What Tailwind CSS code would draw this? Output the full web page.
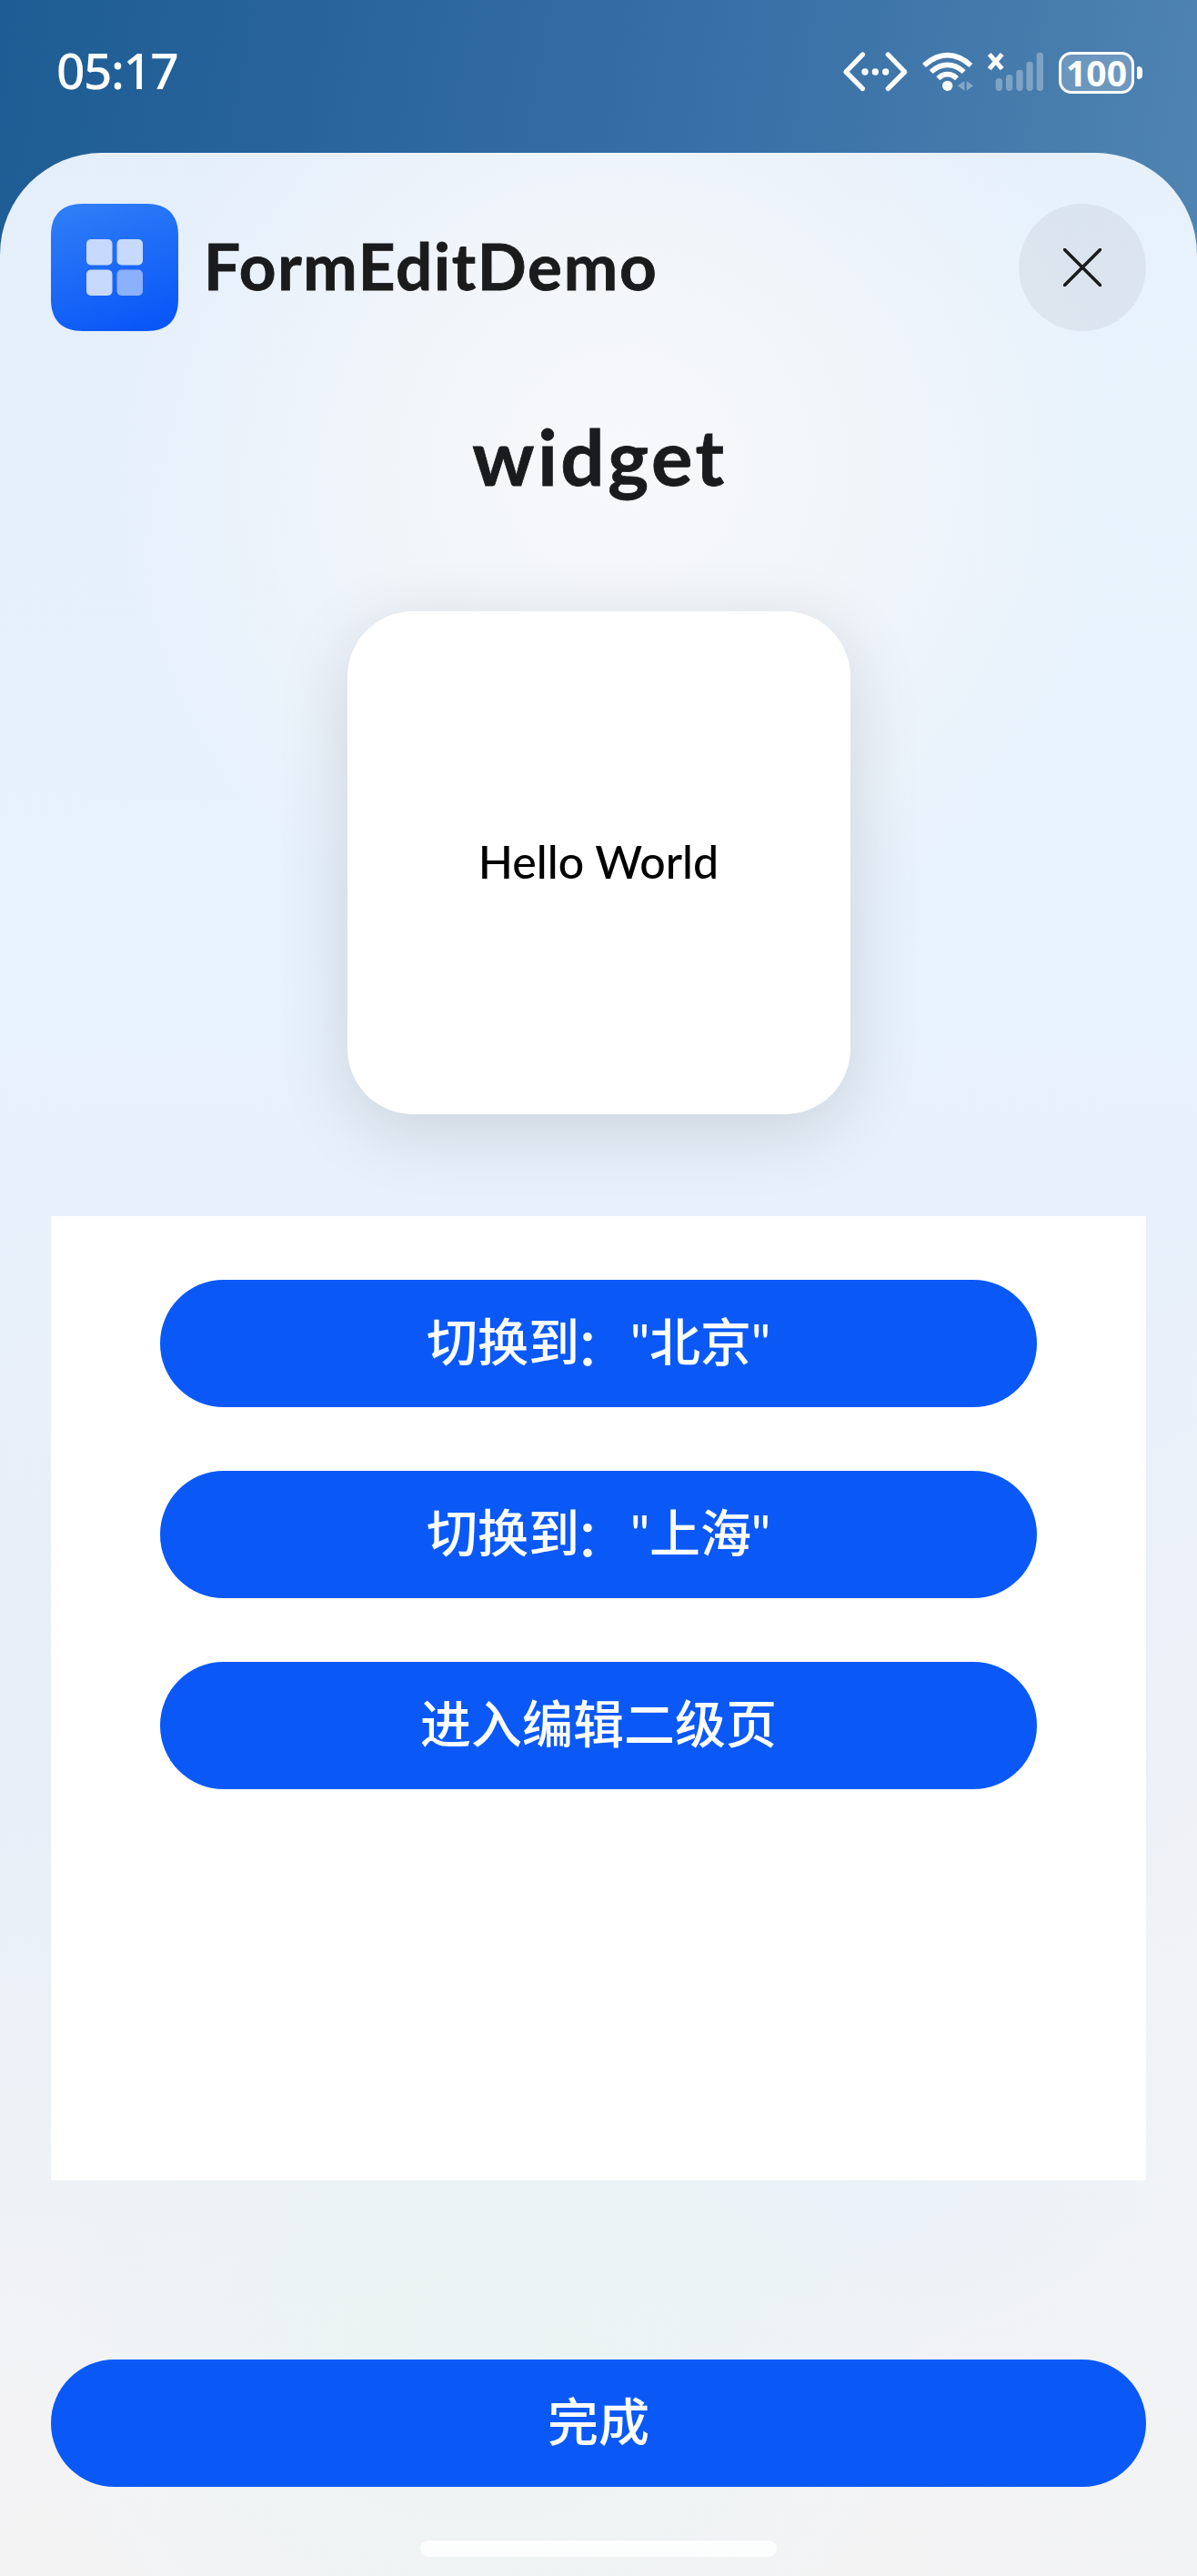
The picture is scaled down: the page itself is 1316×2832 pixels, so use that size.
<!DOCTYPE html>
<html lang="zh-CN">
<head>
<meta charset="utf-8">
<title>FormEditDemo</title>
<script src="https://cdn.jsdelivr.net/npm/@tailwindcss/browser@4"></script>
</head>
<body class="bg-[#1e5c94]">
<div class="flex h-[2832px] w-[1316px] flex-col overflow-hidden bg-[linear-gradient(100deg,#1d5c94_0%,#2b669d_32%,#3870a7_60%,#447aab_80%,#4f84b2_100%)] bg-[length:1316px_300px] bg-no-repeat font-['Lato','Noto_Sans_CJK_SC',sans-serif]">
  <!-- Status bar -->
  <header class="flex h-[168px] shrink-0 items-start justify-between pl-[62px] pr-[60px] pt-[55px] text-white">
    <div class="-mt-[6px] font-['Noto_Sans',sans-serif] text-[55px] font-medium leading-[56px] tracking-[-1.5px]">05:17</div>
    <div class="flex h-[50px]">
      <svg class="h-[50px] w-[75px]" viewBox="75 75 225 150" fill="none" stroke="currentColor" stroke-width="16" stroke-linecap="round" stroke-linejoin="round">
        <path d="M145 90 90 147l55 55M229 90l55 57-55 55"/>
        <g fill="currentColor" stroke="none"><circle cx="153" cy="147" r="11"/><circle cx="187" cy="147" r="11"/><circle cx="221" cy="147" r="11"/></g>
      </svg>
      <svg class="ml-[13px] h-[50px] w-[58px]" viewBox="339 75 174 150" fill="none" stroke="currentColor" stroke-width="17">
        <path d="M348 126Q385 92 425 92t77 34M371 147Q396 124 425 124t54 23M394 169Q408 155 425 155t31 14"/>
        <circle cx="425" cy="193" r="17" fill="currentColor" stroke="none"/>
        <path fill="currentColor" stroke="none" opacity=".35" d="M481 177v32L459 193zM488 177v32l22-16z"/>
      </svg>
      <svg class="ml-[14px] h-[50px] w-[64px]" viewBox="555 75 192 150" fill="currentColor">
        <path fill="none" stroke="currentColor" stroke-width="15" d="M563 89l42 48M605 89l-42 48"/>
        <g opacity=".3"><rect x="584" y="168" width="22" height="42" rx="11"/><rect x="618" y="156" width="22" height="54" rx="11"/><rect x="652" y="140" width="22" height="70" rx="11"/><rect x="685" y="113" width="22" height="97" rx="11"/><rect x="719" y="83" width="22" height="127" rx="11"/></g>
      </svg>
      <div class="ml-[15px] mt-0.5 flex h-[46px] items-center">
        <div class="flex h-[46px] w-[83px] items-center justify-center rounded-[14px] border-[3px] border-white bg-white/20 font-['Noto_Sans',sans-serif] text-[39px] font-bold leading-[40px]">100</div>
        <div class="ml-[3px] h-[14px] w-[6px] rounded-r-[5px] rounded-l-[2px] bg-white"></div>
      </div>
    </div>
  </header>

  <!-- Edit sheet -->
  <main class="flex grow flex-col items-center rounded-t-[112px] px-[56px] pt-[56px] bg-[radial-gradient(ellipse_560px_560px_at_52%_13%,#f7f8fa_0%,#f2f6fa_40%,#f2f6fa00_100%),radial-gradient(ellipse_420px_600px_at_98%_12%,#e8f3fc_0%,#e8f3fc00_100%),radial-gradient(ellipse_500px_380px_at_40%_91%,#eaf4f3_0%,#eaf4f300_100%),radial-gradient(ellipse_460px_260px_at_68%_83%,#eaf2fa_0%,#eaf2fa00_100%),radial-gradient(ellipse_500px_900px_at_105%_80%,#f2f3f6_0%,#f2f3f600_100%),linear-gradient(180deg,#e5effb_0%,#e8f2fc_35%,#e8f0fa_47%,#e8eff9_66%,#eef2f6_84%,#f3f3f5_93%,#f3f3f4_100%)]">
    <div class="flex w-full items-center">
      <svg class="size-[140px]" viewBox="0 0 140 140">
        <defs><linearGradient id="tile" x1=".3" y1="0" x2=".65" y2="1"><stop stop-color="#2e7cf6"/><stop offset="1" stop-color="#0a57f8"/></linearGradient></defs>
        <path fill="url(#tile)" d="M35 0H105C128 0 140 12 140 35V105C140 128 128 140 105 140H35C12 140 0 128 0 105V35C0 12 12 0 35 0Z"/>
        <g fill="#c7d9fd"><rect x="39" y="39" width="28.5" height="28.5" rx="5"/><rect x="72.5" y="39" width="28.5" height="28.5" rx="5"/><rect x="39" y="72.5" width="28.5" height="28.5" rx="5"/></g>
        <rect x="72.5" y="72.5" width="28.5" height="28.5" rx="5" fill="#8bb0fc"/>
      </svg>
      <h1 class="-mt-[4px] ml-[28px] grow text-[71px] font-bold leading-[80px] tracking-[1.7px] text-[#1a1b1c] [-webkit-text-stroke:0.8px_#1a1b1c]">FormEditDemo</h1>
      <button class="flex size-[140px] items-center justify-center rounded-full bg-black/5" aria-label="关闭">
        <svg class="size-[42px]" viewBox="0 0 42 42" fill="none" stroke="#1a1b1c" stroke-width="3.6" stroke-linecap="round"><path d="M1.5 1.5l39 39M40.5 1.5l-39 39"/></svg>
      </button>
    </div>

    <h2 class="mt-[87px] h-[113px] pl-[3px] text-[85px] font-bold leading-[100px] tracking-[3.6px] text-[#1a1b1c] [-webkit-text-stroke:0.8px_#1a1b1c]">widget</h2>

    <div class="mt-[108px] flex size-[553px] items-center justify-center rounded-[72px] bg-white pb-[3px] text-[50px] font-medium text-black shadow-[0_18px_80px_rgba(0,0,0,0.13)]">Hello World</div>

    <section class="mt-[112px] flex h-[1060px] w-full flex-col items-center gap-[70px] bg-white pt-[70px] text-[56px] font-medium text-white">
      <button class="h-[140px] w-4/5 rounded-full bg-[#0a59f7] pb-1">切换到<span class="inline-block -translate-x-[5px] translate-y-[5px]">：</span>"北京"</button>
      <button class="h-[140px] w-4/5 rounded-full bg-[#0a59f7] pb-1">切换到<span class="inline-block -translate-x-[5px] translate-y-[5px]">：</span>"上海"</button>
      <button class="h-[140px] w-4/5 rounded-full bg-[#0a59f7] pb-1">进入编辑二级页</button>
    </section>

    <button class="mt-[197px] h-[140px] w-full shrink-0 rounded-full bg-[#0a59f7] pb-1 text-[56px] font-medium text-white">完成</button>
    <div class="mt-[59px] h-[18px] w-[392px] shrink-0 rounded-full bg-white/80"></div>
  </main>
</div>
</body>
</html>
